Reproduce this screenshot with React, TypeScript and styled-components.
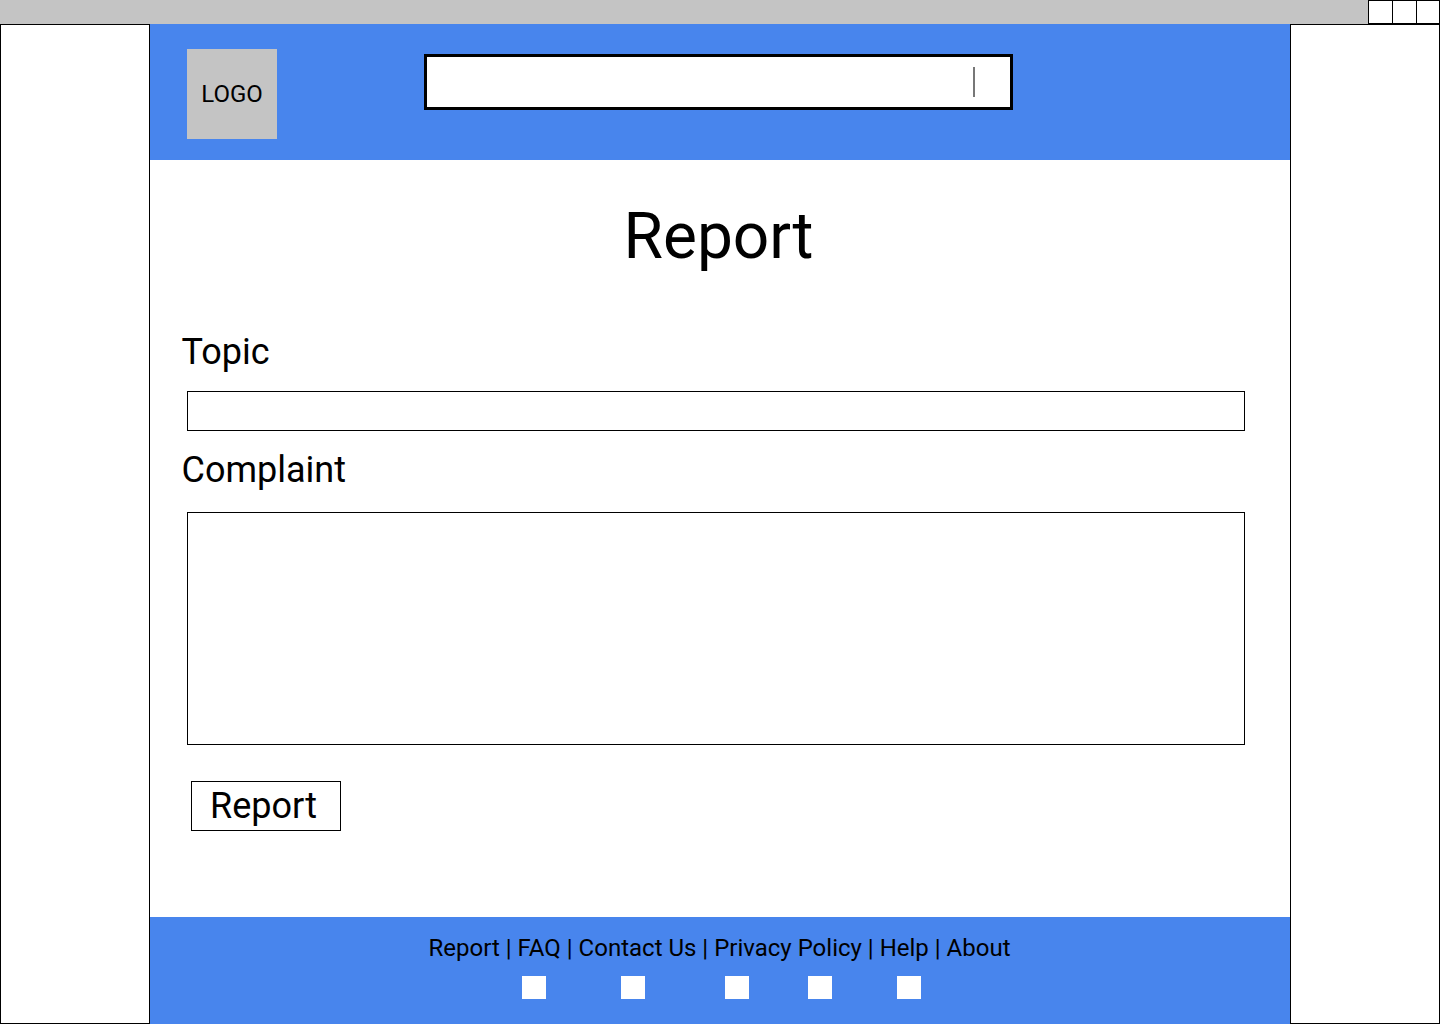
import React from "react";
import styled, { createGlobalStyle } from "styled-components";

const Global = createGlobalStyle`
  html, body { margin: 0; padding: 0; background: #fff; }
  body { font-family: Roboto, "Liberation Sans", sans-serif; color: #000; }
  * { box-sizing: border-box; }
`;
const Page = styled.div`width: 1440px; height: 1024px; display: flex; flex-direction: column; overflow: hidden;`;
const TitleBar = styled.div`height: 24px; background: #c4c4c4; display: flex; justify-content: flex-end; flex: none;`;
const WinButton = styled.div`
  width: 25px; height: 24px; background: #fff; border: 1px solid #000; margin-right: -1px;
  &:last-child { width: 24px; margin-right: 0; }
`;
const Desktop = styled.div`flex: 1; display: grid; grid-template-columns: 150px 1140px 150px; min-height: 0;`;
const Side = styled.div`border: 1px solid #000;`;
const Main = styled.div`display: flex; flex-direction: column; min-height: 0;`;
const Header = styled.header`height: 136px; flex: none; background: #4885ed; display: flex; align-items: flex-start; padding: 25px 0 0 37px;`;
const Logo = styled.div`width: 90px; height: 90px; background: #c4c4c4; display: flex; align-items: center; justify-content: center; font-size: 24px;`;
const Search = styled.div`width: 589px; height: 56px; margin: 5px 0 0 147px; background: #fff; border: 3px solid #000; position: relative;`;
const Caret = styled.span`position: absolute; left: 546px; top: 10px; width: 2px; height: 30px; background: #777;`;
const Content = styled.main`flex: 1; display: flex; flex-direction: column; align-items: flex-start; min-height: 0;`;
const Title = styled.h1`align-self: stretch; margin: 39px 0 0; padding-right: 3px; text-align: center; font-size: 64px; line-height: 75px; font-weight: 400;`;
const Label = styled.label<{ $top: number }>`display: block; margin: ${p => p.$top}px 0 0 31.5px; font-size: 36px; line-height: 42px;`;
const Field = styled.div<{ $h: number; $top: number }>`width: 1058px; height: ${p => p.$h}px; margin: ${p => p.$top}px 0 0 37px; background: #fff; border: 1px solid #000;`;
const Submit = styled.button`width: 150px; height: 50px; margin: 36px 0 0 41px; padding: 0 5px 0 0; background: #fff; border: 1px solid #000; font: 400 36px/42px Roboto, sans-serif; color: #000;`;
const Footer = styled.footer`height: 107px; flex: none; background: #4885ed; display: flex; flex-direction: column; align-items: center; padding-top: 17px;`;
const Links = styled.div`font-size: 24px; line-height: 28px; white-space: nowrap; margin-left: -1px;`;
const Social = styled.div`display: flex; margin-top: 14px; align-self: flex-start; padding-left: 372px;`;
const Square = styled.span<{ $gap: number }>`width: 24px; height: 23px; background: #fff; margin-right: ${p => p.$gap}px;`;

export default function App() {
  return (
    <Page>
      <Global />
      <TitleBar><WinButton /><WinButton /><WinButton /></TitleBar>
      <Desktop>
        <Side />
        <Main>
          <Header>
            <Logo>LOGO</Logo>
            <Search><Caret /></Search>
          </Header>
          <Content>
            <Title>Report</Title>
            <Label $top={57}>Topic</Label>
            <Field $h={40} $top={18} />
            <Label $top={18}>Complaint</Label>
            <Field $h={233} $top={21} />
            <Submit>Report</Submit>
          </Content>
          <Footer>
            <Links>Report | FAQ | Contact Us | Privacy Policy | Help | About</Links>
            <Social>
              <Square $gap={75} /><Square $gap={80} /><Square $gap={59} /><Square $gap={65} /><Square $gap={0} />
            </Social>
          </Footer>
        </Main>
        <Side />
      </Desktop>
    </Page>
  );
}
